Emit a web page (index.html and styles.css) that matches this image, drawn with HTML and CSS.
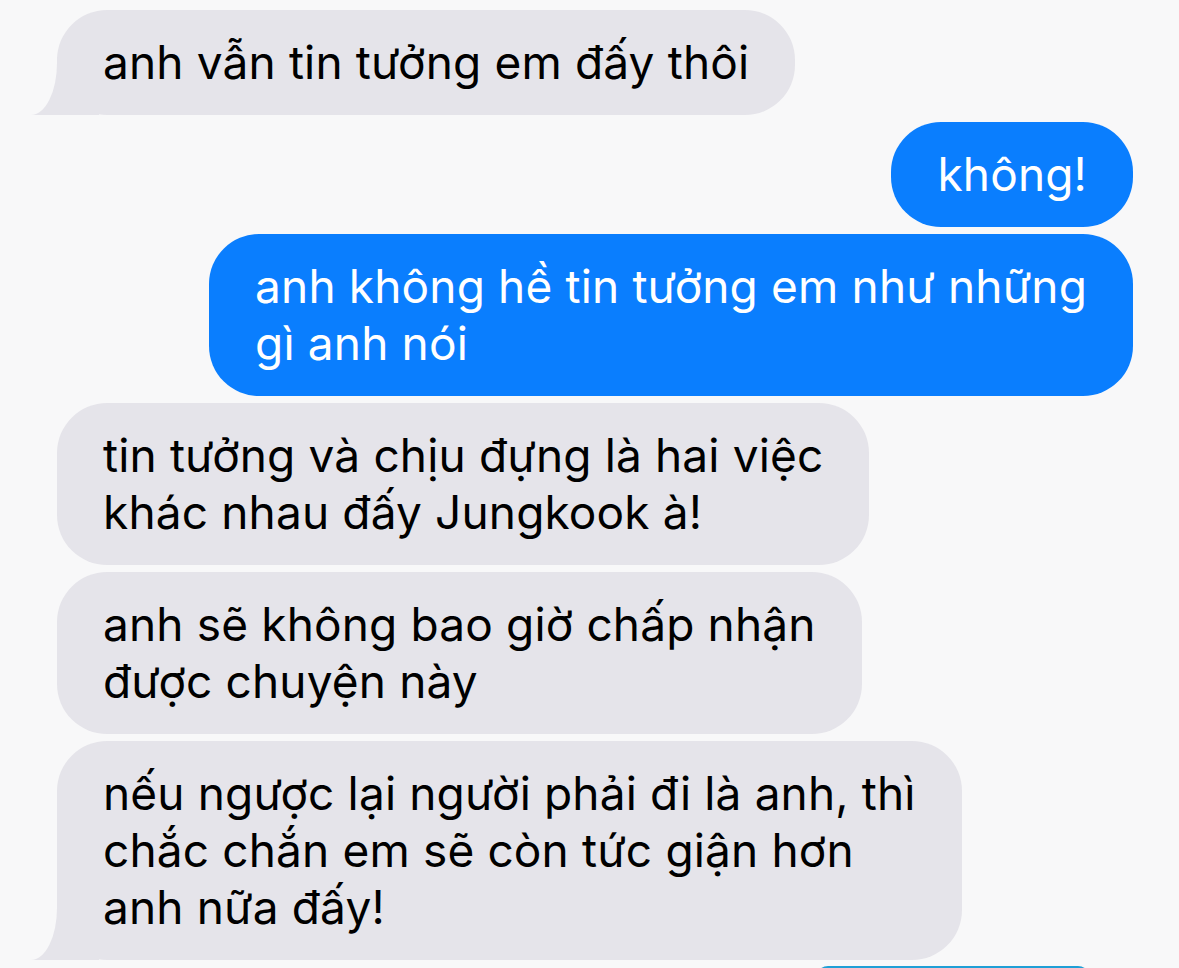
FILE: index.html
```html
<!DOCTYPE html>
<html lang="vi">
<head>
<meta charset="utf-8">
<link rel="stylesheet" href="styles.css">
</head>
<body>
<div class="chat">
  <div class="bubble them tail">anh vẫn tin tưởng em đấy thôi</div>
  <div class="bubble me">không!</div>
  <div class="bubble me">anh không hề tin tưởng em như những<br>gì anh nói</div>
  <div class="bubble them">tin tưởng và chịu đựng là hai việc<br>khác nhau đấy Jungkook à!</div>
  <div class="bubble them">anh sẽ không bao giờ chấp nhận<br>được chuyện này</div>
  <div class="bubble them tail">nếu ngược lại người phải đi là anh, thì<br>chắc chắn em sẽ còn tức giận hơn<br>anh nữa đấy!</div>
  <div class="next"></div>
</div>
</body>
</html>
```
FILE: styles.css
```css
html, body {
  margin: 0;
  padding: 0;
  background: #f8f8f9;
}
body {
  width: 1179px;
  height: 968px;
  overflow: hidden;
  font-family: "Inter", "Noto Sans", sans-serif;
}
.chat {
  display: flex;
  flex-direction: column;
  gap: 7px;
  padding-top: 10px;
}
.bubble {
  position: relative;
  font-size: 46px;
  line-height: 57px;
  padding: 24px 46px;
  border-radius: 50px;
  white-space: nowrap;
  letter-spacing: 0.15px;
}
.them {
  align-self: flex-start;
  margin-left: 57px;
  background: #e5e4ea;
  color: #000;
}
.me {
  align-self: flex-end;
  margin-right: 46px;
  background: #0a7efe;
  color: #fff;
}
.tail::before {
  content: "";
  position: absolute;
  left: -30px;
  bottom: 0;
  width: 72px;
  height: 58px;
  background: #e5e4ea;
}
.tail::after {
  content: "";
  position: absolute;
  left: -70px;
  bottom: 0;
  width: 70px;
  height: 60px;
  background: #f8f8f9;
  border-bottom-right-radius: 26px 52px;
}
.next {
  align-self: flex-end;
  margin-right: 89px;
  margin-top: -1px;
  width: 274px;
  height: 30px;
  border-radius: 12px 12px 0 0;
  background: #1f9fd6;
}
```
